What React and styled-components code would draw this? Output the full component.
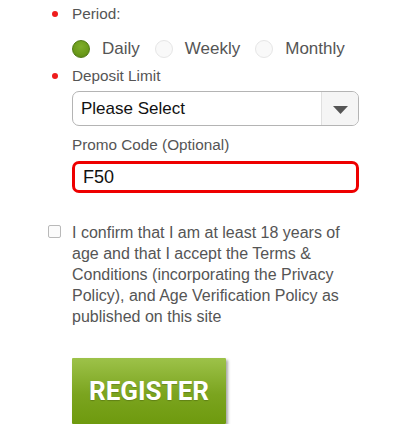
import styled, { createGlobalStyle } from "styled-components";

const GlobalStyle = createGlobalStyle`
   html, body {
      margin: 0;
      padding: 0;
      background: #ffffff;
   }
   body {
      font-family: "Liberation Sans", Arial, sans-serif;
   }
`;

const Form = styled.form`
   width: 408px;
   padding: 5px 0 0 48px;
   box-sizing: border-box;
`;

const Field = styled.div`
   display: grid;
   grid-template-columns: 24px 287px;
   align-items: center;
`;

const Bullet = styled.span`
   width: 6px;
   height: 6px;
   margin-left: 4px;
   border-radius: 50%;
   background: #ee1c1c;
`;

const Label = styled.label`
   grid-column: 2;
   font-size: 15.3px;
   line-height: 18px;
   color: #555555;
`;

const Radios = styled.div`
   grid-column: 2;
   display: flex;
   align-items: center;
   height: 30px;
   margin: 11px 0 3px;
`;

const RadioOption = styled.label`
   display: flex;
   align-items: center;
   gap: 12px;
   margin-right: 15px;
   font-size: 17px;
   color: #555555;
`;

const RadioDot = styled.span`
   width: 18px;
   height: 18px;
   box-sizing: border-box;
   border-radius: 50%;
   border: 1px solid ${(p) => (p.checked ? "#4f7a12" : "#e6e6e6")};
   background: ${(p) =>
      p.checked
         ? "radial-gradient(circle at 50% 35%, #7fae2a 0%, #6a9a1a 60%, #557f12 100%)"
         : "#f9f9f9"};
`;

const SelectBox = styled.div`
   grid-column: 2;
   display: flex;
   height: 35px;
   margin: 6px 0 0;
   box-sizing: border-box;
   border: 1px solid #b4b4b4;
   border-radius: 7px;
   background: #ffffff;
   overflow: hidden;
`;

const SelectValue = styled.div`
   flex: 1;
   display: flex;
   align-items: center;
   padding-left: 8px;
   font-size: 17px;
   color: #111111;
`;

const Chevron = styled.div`
   width: 36px;
   display: flex;
   align-items: center;
   justify-content: center;
   padding-top: 2px;
   border-left: 1px solid #e0e0e0;
   background: #f5f5f5;
`;

const PromoLabel = styled(Label)`
   margin: 10px 0 7px;
`;

const PromoInput = styled.div`
   grid-column: 2;
   height: 32px;
   box-sizing: border-box;
   display: flex;
   align-items: center;
   padding-left: 8px;
   border: 3px solid #ee0000;
   border-radius: 7px;
   font-size: 18px;
   color: #111111;
`;

const Consent = styled.div`
   display: flex;
   align-items: flex-start;
   gap: 11px;
   margin-top: 29px;
`;

const Checkbox = styled.span`
   flex: none;
   width: 13px;
   height: 13px;
   margin-top: 3px;
   box-sizing: border-box;
   border: 1px solid #b9b9b9;
   border-radius: 2px;
   background: #fbfbfb;
`;

const ConsentText = styled.p`
   margin: 0;
   width: 282px;
   font-size: 16px;
   line-height: 21px;
   color: #555555;
`;

const RegisterButton = styled.button`
   display: block;
   width: 154px;
   height: 66px;
   margin: 31px 0 0 24px;
   border: none;
   border-radius: 1px;
   background: linear-gradient(#9dc249, #7ba41f 55%, #6e9a0e);
   box-shadow: 2px 2px 3px rgba(0, 0, 0, 0.35);
   font-family: Roboto, "Liberation Sans", sans-serif;
   font-weight: 700;
   font-size: 26px;
   color: #ffffff;
   text-shadow: 0 1px 1px rgba(0, 0, 0, 0.2);
`;

const periods = [
   { name: "Daily", checked: true },
   { name: "Weekly", checked: false },
   { name: "Monthly", checked: false },
];

const App = () => {
   return (
      <>
         <GlobalStyle />
         <Form>
            <Field>
               <Bullet />
               <Label>Period:</Label>
               <Radios>
                  {periods.map((p) => (
                     <RadioOption key={p.name}>
                        <RadioDot checked={p.checked} />
                        {p.name}
                     </RadioOption>
                  ))}
               </Radios>
               <Bullet />
               <Label>Deposit Limit</Label>
               <SelectBox>
                  <SelectValue>Please Select</SelectValue>
                  <Chevron>
                     <svg width="15" height="8" viewBox="0 0 15 8">
                        <path d="M0 0 L15 0 L7.5 8 Z" fill="#555555" />
                     </svg>
                  </Chevron>
               </SelectBox>
               <PromoLabel>Promo Code (Optional)</PromoLabel>
               <PromoInput>F50</PromoInput>
            </Field>
            <Consent>
               <Checkbox />
               <ConsentText>
                  I confirm that I am at least 18 years of age and that I accept the Terms &amp; Conditions (incorporating the Privacy Policy), and Age Verification Policy as published on this site
               </ConsentText>
            </Consent>
            <RegisterButton type="button">REGISTER</RegisterButton>
         </Form>
      </>
   );
};

export default App;
